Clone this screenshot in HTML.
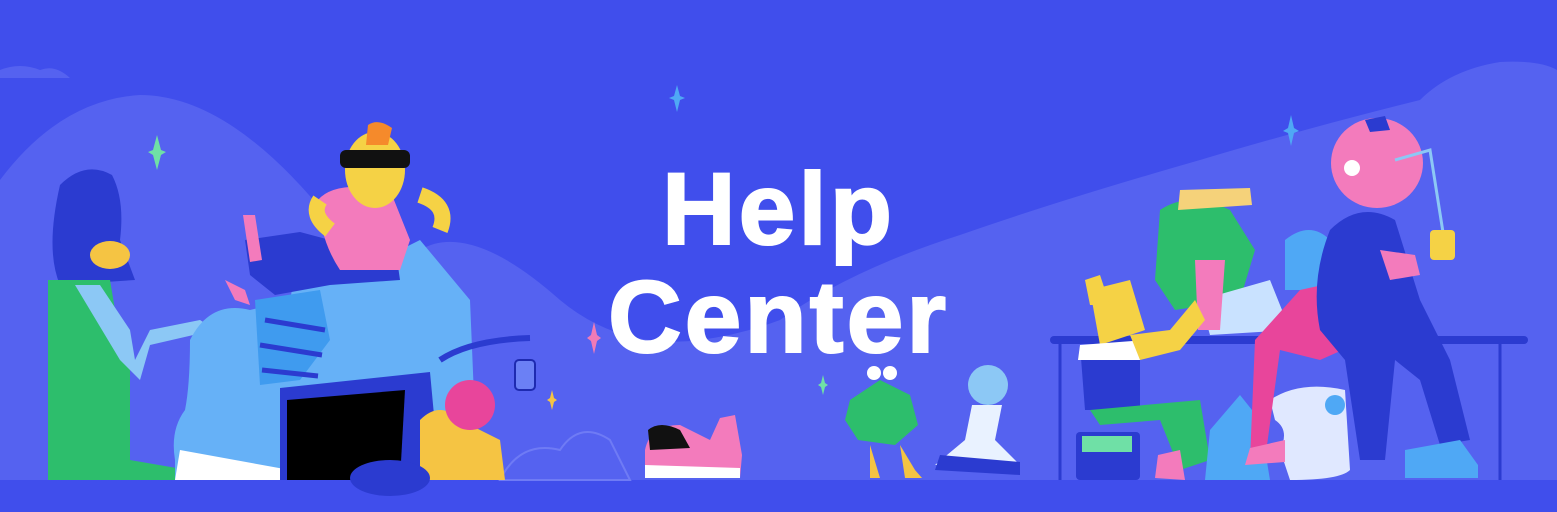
<!DOCTYPE html>
<html><head><meta charset="utf-8"><style>
html,body{margin:0;padding:0;width:1557px;height:512px;overflow:hidden;background:#404EEC;}
.wrap{position:relative;width:1557px;height:512px;}
svg{position:absolute;left:0;top:0;}
.t{position:absolute;left:0;width:1557px;text-align:center;color:#fff;font-family:"Liberation Sans",sans-serif;font-weight:bold;font-size:102px;line-height:1;letter-spacing:3px;-webkit-text-stroke:2px #fff;}
</style></head><body><div class="wrap">
<svg width="1557" height="512" viewBox="0 0 1557 512">
<rect width="1557" height="512" fill="#404EEC"/>
<path d="M0 180 Q60 100 140 95 Q230 95 330 220 Q380 290 420 250 Q470 220 560 300 Q620 350 700 340 Q740 335 780 320 Q850 270 960 235 Q1060 200 1200 160 Q1300 130 1420 100 Q1450 70 1500 62 Q1540 60 1557 70 L1557 480 L0 480Z" fill="#5562F0"/>
<path d="M0 70 Q20 62 40 70 Q55 64 70 78 L0 78Z" fill="#5562F0"/>
<path d="M500 480 Q520 440 560 450 Q580 420 610 440 L630 480Z" fill="none" stroke="#6F7BF5" stroke-width="2"/>
<g fill="#6FE0A6"><path d="M157 135 L161 150 L166 152 L161 155 L157 170 L153 155 L148 152 L153 150Z"/></g>
<g fill="#4FA8F5"><path d="M677 85 L680 96 L685 98 L680 100 L677 112 L674 100 L669 98 L674 96Z"/><path d="M1291 115 L1294 128 L1299 131 L1294 133 L1291 146 L1288 133 L1283 131 L1288 128Z"/></g>
<g fill="#F17BB7"><path d="M594 322 L597 335 L601 338 L597 341 L594 354 L591 341 L587 338 L591 335Z"/></g>
<g fill="#F5C443"><path d="M552 390 L554 398 L557 400 L554 402 L552 410 L550 402 L547 400 L550 398Z"/></g>
<g fill="#6FE0A6"><path d="M823 375 L825 383 L828 385 L825 387 L823 395 L821 387 L818 385 L821 383Z"/></g>
<path d="M60 185 Q85 160 112 175 Q125 200 120 240 L135 280 L60 285 Q45 250 60 185Z" fill="#2B3BD0"/>
<path d="M48 280 L110 280 L115 310 L130 330 L130 460 L188 470 L188 480 L48 480Z" fill="#2DBE6C"/>
<path d="M75 285 L100 285 L130 330 L135 360 L150 330 L200 320 L215 330 L150 345 L140 380 L120 360 Z" fill="#8CC8F5"/>
<ellipse cx="110" cy="255" rx="20" ry="14" fill="#F5C443"/>
<path d="M175 460 Q170 430 185 410 Q190 385 190 340 Q210 300 250 310 L290 300 L300 250 L360 270 L420 240 L470 300 L475 420 L440 470 L290 480 L175 480Z" fill="#66B1F7"/>
<path d="M255 300 L320 290 L330 340 L300 380 L260 385Z" fill="#3F9BEF"/>
<path d="M265 320 L325 330 M260 345 L322 355 M262 370 L318 376" stroke="#2B3BD0" stroke-width="5"/>
<path d="M180 450 L290 470 L290 480 L175 480Z" fill="#fff"/>
<path d="M245 240 L300 232 L330 240 L395 245 L400 280 L330 285 L275 295 L250 275Z" fill="#2B3BD0"/>
<path d="M318 200 Q335 180 390 190 L410 240 L400 270 L340 270 Q320 240 318 200Z" fill="#F37BBC"/>
<ellipse cx="375" cy="170" rx="30" ry="38" fill="#F5D245"/>
<path d="M368 125 Q378 118 392 128 L388 145 L366 145Z" fill="#F58A2B"/>
<rect x="340" y="150" width="70" height="18" rx="6" fill="#111"/>
<path d="M320 200 Q310 215 330 230 M420 195 Q450 205 440 230" stroke="#F5D245" stroke-width="16" fill="none"/>
<path d="M243 215 L255 215 L262 260 L250 262Z M225 280 L245 290 L250 305 L235 300Z" fill="#F37BBC"/>
<path d="M280 388 L430 372 L440 480 L280 480Z" fill="#2B3BD0"/>
<path d="M287 400 L405 390 L400 480 L287 480Z" fill="#000"/>
<path d="M440 360 Q470 340 530 338" stroke="#2B3BD0" stroke-width="6" fill="none"/>
<rect x="515" y="360" width="20" height="30" rx="4" fill="#6B80F5" stroke="#1E2AB0" stroke-width="2"/>
<path d="M420 420 Q440 400 460 420 L500 440 L505 480 L420 480Z" fill="#F5C443"/>
<circle cx="470" cy="405" r="25" fill="#E8459B"/>
<ellipse cx="390" cy="478" rx="40" ry="18" fill="#2B3BD0"/>
<path d="M645 450 Q650 425 680 425 L710 440 L720 418 L735 415 L742 455 L740 478 L645 478Z" fill="#F37BBC"/>
<path d="M648 430 Q660 420 680 430 L690 448 L650 450Z" fill="#111"/>
<path d="M645 465 L740 468 L740 478 L645 478Z" fill="#fff"/>
<path d="M850 400 L880 380 L910 395 L918 425 L895 445 L858 440 L845 420Z" fill="#2DBE6C"/>
<circle cx="874" cy="373" r="7" fill="#fff"/><circle cx="890" cy="373" r="7" fill="#fff"/>
<path d="M870 445 L880 478 L870 478 M900 445 L915 470 L922 478 L905 478Z" fill="#F5C443"/>
<circle cx="988" cy="385" r="20" fill="#8CC8F5"/>
<path d="M972 405 L1002 405 L995 440 L1020 465 L935 465 L965 440Z" fill="#E9F2FF"/>
<path d="M940 455 L1020 462 L1020 475 L935 470Z" fill="#2B3BD0"/>
<rect x="1050" y="336" width="478" height="8" rx="4" fill="#2B3BD0"/>
<path d="M1060 344 V480 M1500 344 V480" stroke="#2B3BD0" stroke-width="3"/>
<path d="M1160 210 Q1190 190 1230 210 L1255 250 L1240 300 L1175 310 L1155 280Z" fill="#2DBE6C"/>
<path d="M1180 190 L1250 188 L1252 205 L1178 210Z" fill="#F5D27A"/>
<path d="M1200 300 L1270 280 L1290 330 L1210 335Z" fill="#C9E2FF"/>
<path d="M1195 260 L1225 260 L1220 330 L1198 330Z" fill="#F37BBC"/>
<path d="M1285 240 Q1310 220 1330 240 L1330 290 L1285 290Z" fill="#4FA8F5"/>
<path d="M1090 290 L1130 280 L1145 330 L1100 345Z" fill="#F5D245"/>
<path d="M1085 280 L1100 275 L1110 305 L1090 305Z" fill="#F5D245"/>
<path d="M1080 345 L1140 345 L1140 410 L1085 410Z" fill="#2B3BD0"/>
<path d="M1080 345 L1145 340 L1140 360 L1078 360Z" fill="#fff"/>
<path d="M1130 335 L1170 330 L1195 300 L1205 320 L1180 350 L1140 360Z" fill="#F5D245"/>
<path d="M1090 410 L1200 400 L1210 460 L1180 470 L1160 420 L1100 425Z" fill="#2DBE6C"/>
<rect x="1076" y="432" width="64" height="48" rx="4" fill="#2B3BD0"/>
<rect x="1082" y="436" width="50" height="16" fill="#6FE0A6"/>
<path d="M1158 455 L1180 450 L1185 480 L1155 478Z" fill="#F37BBC"/>
<path d="M1210 430 L1240 395 L1260 420 L1270 480 L1205 480Z" fill="#4FA8F5"/>
<path d="M1270 400 Q1300 380 1345 390 L1350 470 Q1340 480 1290 480 L1280 450 Q1290 430 1275 420Z" fill="#E0E8FF"/>
<circle cx="1335" cy="405" r="10" fill="#4FA8F5"/>
<path d="M1300 290 L1345 280 L1365 340 L1320 360 L1280 350 L1265 460 L1250 460 L1255 340Z" fill="#E8459B"/>
<path d="M1330 230 Q1360 200 1395 220 L1420 300 L1450 360 L1470 440 L1440 445 L1420 380 L1395 360 L1385 460 L1360 460 L1345 360 L1320 330 Q1310 280 1330 230Z" fill="#2B3BD0"/>
<ellipse cx="1377" cy="163" rx="46" ry="45" fill="#F37BBC"/>
<path d="M1365 120 L1385 116 L1390 130 L1370 132Z" fill="#2B3BD0"/>
<circle cx="1352" cy="168" r="8" fill="#fff"/>
<path d="M1395 160 L1430 150 L1445 245" stroke="#8CC8F5" stroke-width="3" fill="none"/>
<rect x="1430" y="230" width="25" height="30" rx="4" fill="#F5D245"/>
<path d="M1380 250 L1415 255 L1420 275 L1390 280Z" fill="#F37BBC"/>
<path d="M1405 450 L1460 440 L1478 465 L1478 478 L1405 478Z" fill="#4FA8F5"/>
<path d="M1250 448 L1285 440 L1285 462 L1245 465Z" fill="#F37BBC"/>
</svg>
<div class="t" style="top:158px;">Help</div>
<div class="t" style="top:266px;">Center</div>
</div></body></html>
